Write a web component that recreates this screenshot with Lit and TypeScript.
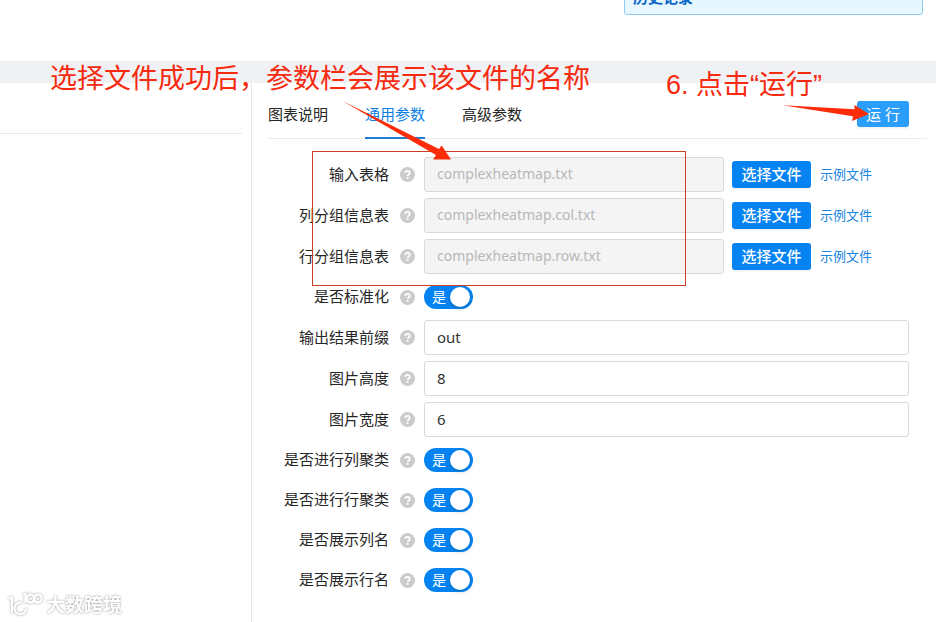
import { LitElement, html, svg, css, nothing } from "lit";
import { customElement, property } from "lit/decorators.js";

type Field = {
  id: string;
  label: string;
  kind: "file" | "text" | "switch";
  value?: string;
};

const FIELDS: Field[] = [
  { id: "table", label: "输入表格", kind: "file", value: "complexheatmap.txt" },
  { id: "col-group", label: "列分组信息表", kind: "file", value: "complexheatmap.col.txt" },
  { id: "row-group", label: "行分组信息表", kind: "file", value: "complexheatmap.row.txt" },
  { id: "normalize", label: "是否标准化", kind: "switch" },
  { id: "prefix", label: "输出结果前缀", kind: "text", value: "out" },
  { id: "height", label: "图片高度", kind: "text", value: "8" },
  { id: "width", label: "图片宽度", kind: "text", value: "6" },
  { id: "cluster-col", label: "是否进行列聚类", kind: "switch" },
  { id: "cluster-row", label: "是否进行行聚类", kind: "switch" },
  { id: "show-col", label: "是否展示列名", kind: "switch" },
  { id: "show-row", label: "是否展示行名", kind: "switch" },
];

const helpIcon = svg`
  <circle cx="7.5" cy="7.5" r="7.5" fill="#cbcbcb"/>
  <path d="M5.2 5.9C5.3 4.5 6.2 3.8 7.5 3.8s2.3.8 2.3 2c0 1.6-2.2 1.7-2.2 3.3" fill="none" stroke="#fff" stroke-width="1.8"/>
  <rect x="6.6" y="10" width="1.9" height="1.8" fill="#fff"/>`;

@customElement("param-row")
class ParamRow extends LitElement {
  @property({ attribute: false }) field!: Field;

  static styles = css`
    :host {
      display: grid;
      grid-template-columns: 121px 15px 1fr;
      align-items: center;
      min-height: 34px;
    }
    .label {
      justify-self: end;
      padding-bottom: 2px;
      white-space: nowrap;
      color: #262626;
    }
    .help {
      width: 15px;
      height: 15px;
      margin-left: 11px;
      display: block;
    }
    .control {
      display: flex;
      align-items: center;
      margin-left: 20px;
    }
    .input {
      box-sizing: border-box;
      height: 35px;
      flex: 1;
      min-width: 0;
      padding: 0 12px 2px;
      border: 1px solid #d9d9d9;
      border-radius: 3px;
      font: inherit;
      color: #333;
      background: #fff;
    }
    .input.file {
      flex: 0 1 300px;
      background: #f4f4f4;
      color: #b8b8b8;
      font-size: 14px;
    }
    .pick {
      flex: none;
      width: 79px;
      height: 27px;
      margin-left: 8px;
      padding: 0;
      border: 0;
      border-radius: 3px;
      background: #0683f3;
      color: #fff;
      font: inherit;
      font-weight: 500;
      line-height: 27px;
      box-shadow: 0 2px 2px rgba(0, 0, 0, 0.05);
    }
    .sample {
      flex: none;
      margin-left: 9px;
      padding-bottom: 2px;
      font-size: 13px;
      color: #1684e0;
      text-decoration: none;
    }
    .switch {
      position: relative;
      display: flex;
      align-items: center;
      box-sizing: border-box;
      width: 49px;
      height: 24px;
      padding-left: 8px;
      border-radius: 12px;
      background: #0683f3;
      color: #fff;
      font-size: 14px;
      line-height: 24px;
    }
    .switch::after {
      content: "";
      position: absolute;
      right: 3px;
      top: 2px;
      width: 20px;
      height: 20px;
      border-radius: 50%;
      background: #fff;
      box-shadow: 0 2px 4px rgba(0, 35, 11, 0.2);
    }
    .check {
      position: absolute;
      inset: 0;
      width: 100%;
      height: 100%;
      margin: 0;
      opacity: 0;
    }
  `;

  private control(f: Field) {
    if (f.kind === "switch") {
      return html`<span class="switch">是<input class="check" id=${f.id} type="checkbox" role="switch" checked /></span>`;
    }
    const file = f.kind === "file";
    return html`<input class="input ${f.kind}" id=${f.id} type="text" .value=${f.value ?? ""} ?disabled=${file} />
      ${file
        ? html`<button class="pick" type="button">选择文件</button><a class="sample" href="#">示例文件</a>`
        : nothing}`;
  }

  render() {
    const f = this.field;
    return html`
      <label class="label" for=${f.id}>${f.label}</label>
      <svg class="help" viewBox="0 0 15 15" aria-hidden="true">${helpIcon}</svg>
      <div class="control">${this.control(f)}</div>
    `;
  }
}

@customElement("app-root")
class AppRoot extends LitElement {
  static styles = css`
    :host {
      display: flex;
      flex-direction: column;
      position: relative;
      min-height: 100vh;
      overflow: hidden;
      background: #fff;
      color: #262626;
      font: 15px/20px "Noto Sans", "Noto Sans CJK SC", sans-serif;
    }
    .top {
      display: flex;
      justify-content: flex-end;
      align-items: flex-end;
      box-sizing: border-box;
      height: 61px;
      padding: 0 13px 46px;
    }
    .history {
      box-sizing: border-box;
      width: 299px;
      padding: 8px 8px 7px;
      border: 1px solid #91caee;
      border-radius: 3px;
      background: #e6f7ff;
      color: #0b66c8;
      font-weight: 700;
    }
    .band {
      height: 22px;
      background: #f0f1f5;
    }
    .body {
      flex: 1;
      display: grid;
      grid-template-columns: 252px 1fr;
    }
    .side {
      border-right: 1px solid #e8e8e8;
    }
    .side-head {
      height: 50px;
      margin-right: 9px;
      border-bottom: 1px solid #e8e8e8;
    }
    .panel {
      padding: 8px 9px 0 16px;
    }
    .bar {
      display: flex;
      align-items: center;
      gap: 37px;
      height: 47px;
      padding-right: 18px;
      border-bottom: 1px solid #ebebeb;
    }
    .tab {
      height: 48px;
      box-sizing: border-box;
      margin-bottom: -1px;
      padding: 0 0 2px;
      border: 0;
      background: none;
      color: inherit;
      font: inherit;
      white-space: nowrap;
    }
    .tab.on {
      color: #0e80e4;
      box-shadow: inset 0 -2px #1c7fd0;
    }
    .run {
      height: 26px;
      width: 52px;
      margin: 0 0 1px auto;
      padding: 0 0 1px;
      border: 0;
      border-radius: 3px;
      background: #2b9dfb;
      color: #fff;
      font: inherit;
      box-shadow: 0 2px 2px rgba(0, 0, 0, 0.05);
    }
    .form {
      display: flex;
      flex-direction: column;
      gap: 6px;
      padding: 18px 18px 24px 0;
    }
    .note {
      position: absolute;
      color: #f52a0e;
      font-family: "Liberation Sans", "Noto Sans CJK SC", sans-serif;
      font-size: 27px;
      line-height: 36px;
      white-space: nowrap;
      pointer-events: none;
    }
    .note-file {
      left: 50px;
      top: 61px;
    }
    .note-run {
      right: 114px;
      top: 67px;
    }
    .frame {
      position: absolute;
      left: 312px;
      top: 151px;
      box-sizing: border-box;
      width: 374px;
      height: 135px;
      border: 1px solid #cb4022;
      pointer-events: none;
    }
    .arrow {
      position: absolute;
      fill: #fd2b08;
      pointer-events: none;
    }
    .arrow-file {
      left: 342px;
      top: 100px;
    }
    .arrow-run {
      right: 66px;
      top: 100px;
    }
    .brand {
      position: absolute;
      left: 8px;
      top: 592px;
      display: flex;
      align-items: center;
      gap: 3px;
      color: #fff;
      font-size: 19px;
      font-weight: 700;
      line-height: 26px;
      filter: drop-shadow(0 0 1px #999);
    }
    .brand-mark {
      fill: none;
      stroke: #fff;
      stroke-width: 2.4;
      stroke-linecap: round;
    }
  `;

  render() {
    return html`
      <header class="top"><div class="history">历史记录</div></header>
      <div class="band"></div>
      <main class="body">
        <aside class="side"><div class="side-head"></div></aside>
        <section class="panel">
          <nav class="bar">
            <button class="tab" type="button">图表说明</button>
            <button class="tab on" type="button">通用参数</button>
            <button class="tab" type="button">高级参数</button>
            <button class="run" type="button">运 行</button>
          </nav>
          <form class="form">
            ${FIELDS.map((f) => html`<param-row .field=${f}></param-row>`)}
          </form>
        </section>
      </main>

      <div class="frame"></div>
      <div class="note note-file">选择文件成功后，参数栏会展示该文件的名称</div>
      <div class="note note-run">6. 点击“运行”</div>
      <svg class="arrow arrow-file" width="110" height="61" viewBox="0 0 110 61">
        <path d="M.5 1 97 49 99.7 45.5 109 59.5 91 59.5 94 55Z" />
      </svg>
      <svg class="arrow arrow-run" width="88" height="22" viewBox="0 0 88 22">
        <path d="M.5 5.3 72.5 9.2 72.5 5 87 14 70 21 71 16.3Z" />
      </svg>
      <div class="brand">
        <svg class="brand-mark" width="35" height="26" viewBox="0 0 35 26" aria-hidden="true">
          <path d="M1.5 6.5 4 5.5V20M16 2.5 17.5 2V10M12.5 10.5A5.8 5.8 0 1 0 18 17.5" />
          <ellipse cx="22.5" cy="6.5" rx="3.6" ry="4" />
          <ellipse cx="30" cy="6.5" rx="3.6" ry="4" />
        </svg>
        <span>大数跨境</span>
      </div>
    `;
  }
}
